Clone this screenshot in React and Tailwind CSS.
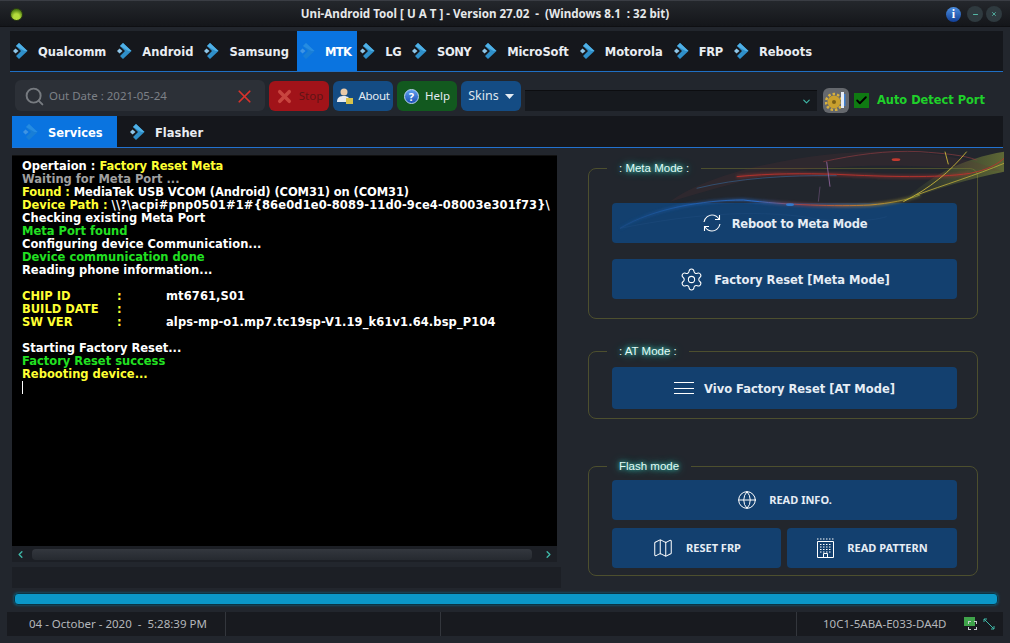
import React from 'react';
import { Settings, Globe, Map, Search, X, ChevronDown, ChevronLeft, ChevronRight, Check, Minus } from 'lucide-react';

const verdana = { fontFamily: '"DejaVu Sans", sans-serif' };
const tahoma = { fontFamily: '"Noto Sans", "Open Sans", sans-serif' };
const arial = { fontFamily: '"Liberation Sans", sans-serif' };

function ArrowIcon({ faded }) {
  return (
    <svg width="16" height="18" viewBox="0 0 16 18" className={faded ? 'shrink-0 opacity-40' : 'shrink-0'}>
      <path d="M7 1 L15.5 9 L7 17 L4 14 L9 9 L4 4 Z" fill="#2f8fc9" />
      <path d="M7 1 L15.5 9 L12.5 9 L4 4 Z" fill="#4fb0e6" />
      <path d="M3.5 6.5 L6.5 9 L3.5 11.5 L1 9 Z" fill="#8fc6e8" />
    </svg>
  );
}

function TopTab({ label, active, tracking = '' }) {
  return (
    <div className={`h-full flex items-center gap-[10px] pl-[2px] text-[11.5px] font-bold ${active ? 'pr-[6px] bg-[#0a74e0] text-white' : 'pr-[8px] text-[#e9edf2]'}`}>
      <ArrowIcon faded={active} />
      <span className={`pt-[4px] ${tracking}`}>{label}</span>
    </div>
  );
}

function Toolbtn({ bg, color, width, children }) {
  return (
    <div className={`h-[30px] rounded-md flex items-center justify-center gap-[3px] pt-px text-[11.5px] ${bg} ${color} ${width}`}>
      {children}
    </div>
  );
}

function LogLine({ children, color = 'text-white' }) {
  return <div className={`h-[13px] leading-[13px] whitespace-pre ${color}`}>{children}</div>;
}

function InfoRow({ label, value }) {
  return (
    <div className="h-[13px] leading-[13px] whitespace-pre flex">
      <span className="w-[95px] text-[#ffff33]">{label}</span>
      <span className="w-[49px] text-[#ffff33]">:</span>
      <span className="text-white tracking-[0.1px]">{value}</span>
    </div>
  );
}

function RebootIcon() {
  return (
    <svg width="20" height="20" viewBox="0 0 20 20" fill="none" stroke="currentColor" strokeWidth="1.1">
      <path d="M2 9 C3 4 7 2 10 2 C13 2 15 3 17 6" />
      <path d="M17.5 2 V6.5 H13" />
      <path d="M18 11 C17 16 13 18 10 18 C7 18 5 17 3 14" />
      <path d="M2.5 18 V13.5 H7" />
    </svg>
  );
}

function LinesIcon() {
  return (
    <svg width="20" height="14" viewBox="0 0 20 14" fill="currentColor">
      <rect x="0" y="1" width="20" height="1" />
      <rect x="0" y="7" width="20" height="1" />
      <rect x="0" y="12" width="20" height="1" />
    </svg>
  );
}

function BuildingIcon() {
  return (
    <svg width="19" height="20" viewBox="0 0 19 20" fill="none" stroke="currentColor" strokeWidth="1">
      <path d="M1.5 3.5 H17.5 V19.5 H1.5 Z" />
      <path d="M1 1 H18" strokeDasharray="1.5 1.5" />
      <path d="M4 6.5 H15 M4 9 H15 M4 11.5 H15 M4 14 H15" strokeDasharray="1.5 1.5" />
      <path d="M7.5 19.5 V15.5 H11.5 V19.5" />
    </svg>
  );
}

function ModeButton({ icon, height = 'h-[40px]', width = 'w-full', gap = 'gap-[10px]', condensed, label, tracking = '' }) {
  return (
    <div
      className={`${height} ${width} rounded-[4px] bg-[#13406f] flex items-center justify-center ${gap} text-[#e6edf5] font-bold ${condensed ? 'text-[11px]' : 'text-[11.5px]'}`}
      style={condensed ? tahoma : undefined}
    >
      <span className="text-white flex items-center">{icon}</span>
      <span className={`${condensed ? 'pt-px' : 'pt-[3px]'} ${tracking}`}>{label}</span>
    </div>
  );
}

function GroupBox({ title, className, children }) {
  return (
    <fieldset className={`border border-[#4d4f2e] rounded-lg w-[390px] pl-[23px] pr-[20px] ${className}`}>
      <legend className="-ml-[5px] px-[12px] h-[16px] leading-[16px] text-[11.5px] text-[#e2fbf6] [text-shadow:0_0_4px_#3fd6c4,0_0_8px_#2bb5a6]" style={arial}>
        {title}
      </legend>
      {children}
    </fieldset>
  );
}

function Swoosh() {
  return (
    <svg className="absolute left-[8px] top-0 z-10 pointer-events-none" width="434" height="97" viewBox="0 9 1302 291" fill="none">
      <defs>
        <linearGradient id="sw" x1="0" x2="1" y1="0" y2="0">
          <stop offset="0" stopColor="#1f5fb0" stopOpacity="0.25" />
          <stop offset="0.45" stopColor="#2a70d0" stopOpacity="0.95" />
          <stop offset="0.62" stopColor="#b8423a" stopOpacity="0.9" />
          <stop offset="0.85" stopColor="#c9902a" stopOpacity="0.9" />
          <stop offset="1" stopColor="#8f9c3a" stopOpacity="0.7" />
        </linearGradient>
        <linearGradient id="haze" x1="0" x2="1" y1="0" y2="0">
          <stop offset="0" stopColor="#7a8f3a" stopOpacity="0.05" />
          <stop offset="1" stopColor="#a8b83f" stopOpacity="0.45" />
        </linearGradient>
        <filter id="soft" x="-5%" y="-20%" width="110%" height="140%">
          <feGaussianBlur stdDeviation="5" />
        </filter>
      </defs>
      <path d="M1000 170 C1080 90 1180 40 1302 20 V80 C1200 100 1100 130 1000 170 Z" fill="url(#haze)" />
      <path d="M300 170 C450 60 800 10 1000 20 C1100 25 1200 40 1302 80 C1100 60 800 50 600 90 C500 110 400 140 300 170 Z" fill="#6a3038" opacity="0.18" />
      <g filter="url(#soft)" opacity="0.7">
        <path d="M150 250 C250 190 400 165 520 165 C650 180 800 185 900 180 C960 175 1010 165 1050 150" stroke="url(#sw)" strokeWidth="8" />
        <path d="M500 95 C600 85 700 85 800 88 C950 95 1100 100 1200 85" stroke="#a8332e" strokeWidth="7" />
      </g>
      <path d="M150 250 C250 190 400 165 520 165 C650 180 800 185 900 180 C960 175 1010 165 1050 150" stroke="url(#sw)" strokeWidth="3" />
      <path d="M500 95 C600 85 700 85 800 88 C950 95 1100 100 1200 85 C1250 75 1280 60 1302 40" stroke="#b8332e" strokeWidth="3" opacity="0.9" />
      <path d="M760 50 C850 30 950 15 1050 20 C1120 25 1180 30 1220 45" stroke="#8a3a40" strokeWidth="2.5" opacity="0.85" />
      <path d="M380 130 C500 100 650 90 800 92" stroke="#34628f" strokeWidth="2.5" opacity="0.8" />
      <path d="M150 250 C300 220 500 190 700 215 C800 235 900 230 950 215" stroke="#2c5a8f" strokeWidth="1.5" opacity="0.45" />
      <path d="M770 50 L780 125" stroke="#9a6ca8" strokeWidth="3" opacity="0.8" />
      <path d="M750 125 L745 170" stroke="#9a6ca8" strokeWidth="2" opacity="0.6" />
      <path d="M1000 170 C1080 130 1140 80 1190 20" stroke="#c9b63a" strokeWidth="3" opacity="0.9" />
      <path d="M1040 150 C1120 120 1220 90 1302 55" stroke="#b8a83a" strokeWidth="3" opacity="0.85" />
      <path d="M1125 20 L1135 58" stroke="#c9b63a" strokeWidth="3" opacity="0.9" />
      <ellipse cx="978" cy="44" rx="13" ry="4" fill="#d43c30" opacity="0.9" />
      <ellipse cx="660" cy="179" rx="12" ry="4" fill="#2d7fd8" opacity="0.9" />
    </svg>
  );
}

export default function App() {
  return (
    <div className="w-[1010px] h-[643px] overflow-hidden bg-[#22262d] flex flex-col text-white" style={verdana}>
      {/* title bar */}
      <div className="h-[27px] shrink-0 pr-[40px] border-t border-[#3a3d44] border-b border-b-[#0e0f12] bg-gradient-to-b from-[#24272c] to-[#14161a] relative flex items-center justify-center">
        <span className="absolute left-[10px] top-[7px] w-[13px] h-[13px] rounded-full bg-[radial-gradient(circle_at_50%_70%,#b4dc3c_30%,#4a7a10_75%)] border border-[#2b3a14]" />
        <span className="text-[11.6px] font-bold text-[#e6e8ea] whitespace-pre" style={tahoma}>
          Uni-Android Tool [ U A T ] - Version 27.02  -  (Windows 8.1  : 32 bit)
        </span>
        <div className="absolute right-[8px] top-[5px] flex items-center gap-[3px]">
          <span className="w-[15px] h-[15px] mr-[3px] rounded-full bg-gradient-to-b from-[#4d8fe0] to-[#123f96] text-white text-[12px] font-bold leading-[15px] text-center" style={{ fontFamily: '"Liberation Serif", serif' }}>i</span>
          <span className="w-[16px] h-[16px] rounded-full bg-[#2f3a3f] flex items-center justify-center text-[#59c9b5]"><Minus size={7} strokeWidth={3} /></span>
          <span className="w-[16px] h-[16px] rounded-full bg-[#2f3a3f] flex items-center justify-center text-[#59c9b5]"><X size={6} strokeWidth={3} /></span>
        </div>
      </div>

      <div className="flex-1 pl-[10px] pr-[7px] flex flex-col min-h-0">
        {/* main tabs */}
        <div className="h-[41px] mt-[4px] shrink-0 bg-[#15171c] border-b border-[#1f6fc4] flex items-stretch">
          <TopTab label="Qualcomm" />
          <TopTab label="Android" />
          <TopTab label="Samsung" />
          <TopTab label="MTK" active tracking="tracking-[-0.6px]" />
          <TopTab label="LG" tracking="tracking-[-0.5px]" />
          <TopTab label="SONY" tracking="tracking-[-0.5px]" />
          <TopTab label="MicroSoft" tracking="tracking-[-0.1px]" />
          <TopTab label="Motorola" />
          <TopTab label="FRP" tracking="tracking-[-0.3px]" />
          <TopTab label="Reboots" />
        </div>

        {/* toolbar */}
        <div className="h-[31px] mt-[8px] shrink-0 pl-[5px] flex items-center gap-[4px]" style={tahoma}>
          <div className="w-[250px] h-[31px] rounded-md bg-[#2c3037] flex items-center pl-[9px] pr-[10px] pt-px text-[#7d8187] text-[11.5px]">
            <Search size={21} strokeWidth={2.2} className="text-[#777b80]" />
            <span className="ml-[4px] flex-1">Out Date : 2021-05-24</span>
            <X size={21} strokeWidth={2} className="text-[#d8332b]" />
          </div>
          <Toolbtn bg="bg-[#a11319]" color="text-[#5f1416]" width="w-[60px]">
            <X size={19} strokeWidth={4.5} className="text-[#c8453f]" />
            <span className="ml-[2px]">Stop</span>
          </Toolbtn>
          <Toolbtn bg="bg-[#144c84]" color="text-[#e4ebf2]" width="w-[60px]">
            <svg width="19" height="19" viewBox="0 0 19 19">
              <circle cx="8" cy="5" r="3.5" fill="#e8c9a8" />
              <path d="M1 15 C1 10 4 9 8 9 C12 9 14 11 14 15 Z" fill="#e6e9ee" />
              <rect x="10" y="11" width="7" height="6" fill="#d8c24a" />
            </svg>
            <span className="tracking-[-0.3px]">About</span>
          </Toolbtn>
          <Toolbtn bg="bg-[#12591f]" color="text-[#e4ebf2]" width="w-[60px]">
            <span className="w-[15px] h-[15px] mr-[3px] rounded-full bg-gradient-to-b from-[#5f9ff0] to-[#1b4fb5] border border-[#bcd4f5] text-white text-[11px] font-bold leading-[13px] text-center">?</span>
            <span>Help</span>
          </Toolbtn>
          <Toolbtn bg="bg-[#144c84]" color="text-[#dfe6ee]" width="w-[60px]">
            <span className="text-[12.5px]">Skins</span>
            <svg width="9" height="5" viewBox="0 0 9 5" className="ml-[3px]"><path d="M0 0 H9 L4.5 5 Z" fill="#e4ebf2" /></svg>
          </Toolbtn>
          <div className="w-[292px] h-[21px] mt-[10px] bg-[#16191e] border-t border-[#0c0d10] flex items-center justify-end pr-[5px] text-[#3fb8a8]">
            <ChevronDown size={11} strokeWidth={2.5} />
          </div>
          <div className="ml-[2px] w-[26px] h-[25px] mt-[10px] rounded-md bg-[#65686d] flex items-center justify-center">
            <svg width="22" height="20" viewBox="0 0 22 20">
              <circle cx="9" cy="11" r="6.5" fill="#c9a02e" />
              <circle cx="9" cy="11" r="8" fill="none" stroke="#d8b13e" strokeWidth="2.5" strokeDasharray="2.5 2" />
              <circle cx="9" cy="11" r="2" fill="#7a5f16" />
              <rect x="16" y="1" width="3" height="16" fill="#e6ecf5" />
              <rect x="19" y="3" width="1.5" height="12" fill="#3f7fd0" />
            </svg>
          </div>
          <div className="ml-[1px] w-[15px] h-[15px] mt-[10px] bg-[#0f7a12] flex items-center justify-center text-black">
            <Check size={13} strokeWidth={3.5} />
          </div>
          <span className="ml-[4px] mt-[10px] text-[11.4px] font-bold text-[#1fd12a]" style={verdana}>Auto Detect Port</span>
        </div>

        {/* sub tabs */}
        <div className="h-[32px] mt-[5px] ml-[2px] shrink-0 bg-[#15171c] border-b border-[#2272cf] flex items-stretch text-[11.5px] font-bold">
          <div className="w-[105px] bg-[#0a74e0] text-white flex items-center pl-[10px] gap-[10px]">
            <ArrowIcon faded />
            <span className="pt-[4px]">Services</span>
          </div>
          <div className="flex items-center pl-[12px] gap-[10px] text-[#e9edf2]">
            <ArrowIcon />
            <span className="pt-[4px]">Flasher</span>
          </div>
        </div>

        {/* content */}
        <div className="flex-1 flex min-h-0 relative">
          <div className="w-[550px] shrink-0 ml-[2px] flex flex-col">
            <div className="mt-[7px] h-[391px] w-[545px] bg-black pl-[10px] pt-[4px] overflow-hidden text-[11.5px] font-semibold border-t border-[#111]">
              <LogLine>Opertaion : <span className="text-[#ffff33] tracking-[-0.1px]">Factory Reset Meta</span></LogLine>
              <LogLine color="text-[#a0a0a0]">Waiting for Meta Port ...</LogLine>
              <LogLine><span className="text-[#ffff33] tracking-[-0.1px]">Found : </span><span className="tracking-[-0.1px]">MediaTek USB VCOM (Android) (COM31) on (COM31)</span></LogLine>
              <LogLine><span className="text-[#ffff33]">Device Path : </span><span className="tracking-[0.13px]">{'\\\\?\\acpi#pnp0501#1#{86e0d1e0-8089-11d0-9ce4-08003e301f73}\\'}</span></LogLine>
              <LogLine>Checking existing Meta Port</LogLine>
              <LogLine color="text-[#22e022]">Meta Port found</LogLine>
              <LogLine>Configuring device Communication...</LogLine>
              <LogLine color="text-[#22e022]">Device communication done</LogLine>
              <LogLine>Reading phone information...</LogLine>
              <LogLine> </LogLine>
              <InfoRow label="CHIP ID" value="mt6761,S01" />
              <InfoRow label="BUILD DATE" value="" />
              <InfoRow label="SW VER" value="alps-mp-o1.mp7.tc19sp-V1.19_k61v1.64.bsp_P104" />
              <LogLine> </LogLine>
              <LogLine>Starting Factory Reset...</LogLine>
              <LogLine color="text-[#22e022]">Factory Reset success</LogLine>
              <LogLine color="text-[#ffff33]">Rebooting device...</LogLine>
              <div className="w-px h-[13px] bg-white" />
            </div>
            <div className="h-[16px] w-[545px] bg-[#1c1f25] flex items-center px-[3px] text-[#3fb8a8]">
              <ChevronLeft size={11} strokeWidth={3} />
              <div className="w-[500px] ml-[6px] mr-[11px] h-[11px] rounded-sm bg-gradient-to-b from-[#33373e] to-[#262a30]" />
              <ChevronRight size={11} strokeWidth={3} />
            </div>
            <div className="mt-[5px] h-[21px] w-[549px] bg-[#1c1f25]" />
          </div>

          <div className="flex-1 relative pl-[26px] pt-[12px]">
            <Swoosh />
            <GroupBox title=": Meta Mode :" className="h-[159px]">
              <div className="mt-[27px] flex flex-col gap-[16px]">
                <ModeButton icon={<RebootIcon />} tracking="tracking-[-0.2px]" label="Reboot to Meta Mode" />
                <ModeButton icon={<Settings size={25} strokeWidth={1} />} label="Factory Reset [Meta Mode]" />
              </div>
            </GroupBox>
            <GroupBox title=": AT Mode :" className="h-[76px] mt-[24px]">
              <div className="mt-[8px]">
                <ModeButton icon={<LinesIcon />} height="h-[42px]" label="Vivo Factory Reset [AT Mode]" />
              </div>
            </GroupBox>
            <GroupBox title="Flash mode" className="h-[118px] mt-[39px]">
              <div className="mt-[6px] flex flex-col gap-[8px]">
                <ModeButton icon={<Globe size={20} strokeWidth={1.2} />} condensed gap="gap-[12px]" label="READ INFO." />
                <div className="flex gap-[6px]">
                  <ModeButton icon={<Map size={22} strokeWidth={1.1} />} condensed width="w-[169px]" gap="gap-[12px]" label="RESET FRP" />
                  <ModeButton icon={<BuildingIcon />} condensed width="w-[170px]" gap="gap-[12px]" label="READ PATTERN" />
                </div>
              </div>
            </GroupBox>
          </div>
        </div>
      </div>

      {/* progress */}
      <div className="h-[12px] mt-[1px] mx-[14px] mb-[7px] shrink-0 w-[984px] rounded-[4px] border border-[#0c3442] bg-[#0b97c8] shadow-[0_0_3px_#0e6f94]" />

      {/* status bar */}
      <div className="h-[24px] mb-[7px] ml-[7px] mr-[7px] shrink-0 bg-[#181a1f] flex items-center text-[11.5px] text-[#b4b7bb]" style={tahoma}>
        <div className="w-[219px] pl-[22px] h-full flex items-center border-r border-[#33363c] whitespace-pre">04 - October - 2020  -  5:28:39 PM</div>
        <div className="w-[215px] h-full border-r border-[#33363c]" />
        <div className="w-[150px] h-full" />
        <div className="w-[206px] h-full border-r border-[#33363c]" />
        <div className="flex-1 pl-[26px] flex items-center">
          <span>10C1-5ABA-E033-DA4D</span>
          <span className="ml-[18px] relative w-[15px] h-[14px]">
            <span className="absolute left-0 top-0 w-[11px] h-[9px] bg-[#3fa34a]" />
            <span className="absolute left-[4px] top-[4px] w-[9px] h-[9px] border border-dashed border-[#c8ccd0]" />
          </span>
          <svg width="12" height="12" viewBox="0 0 12 12" className="ml-[4px]" fill="none" stroke="#3fb8a8" strokeWidth="1">
            <path d="M1 1 L11 11 M1 1 H4 M1 1 V4 M11 11 H8 M11 11 V8" />
          </svg>
        </div>
      </div>
    </div>
  );
}
